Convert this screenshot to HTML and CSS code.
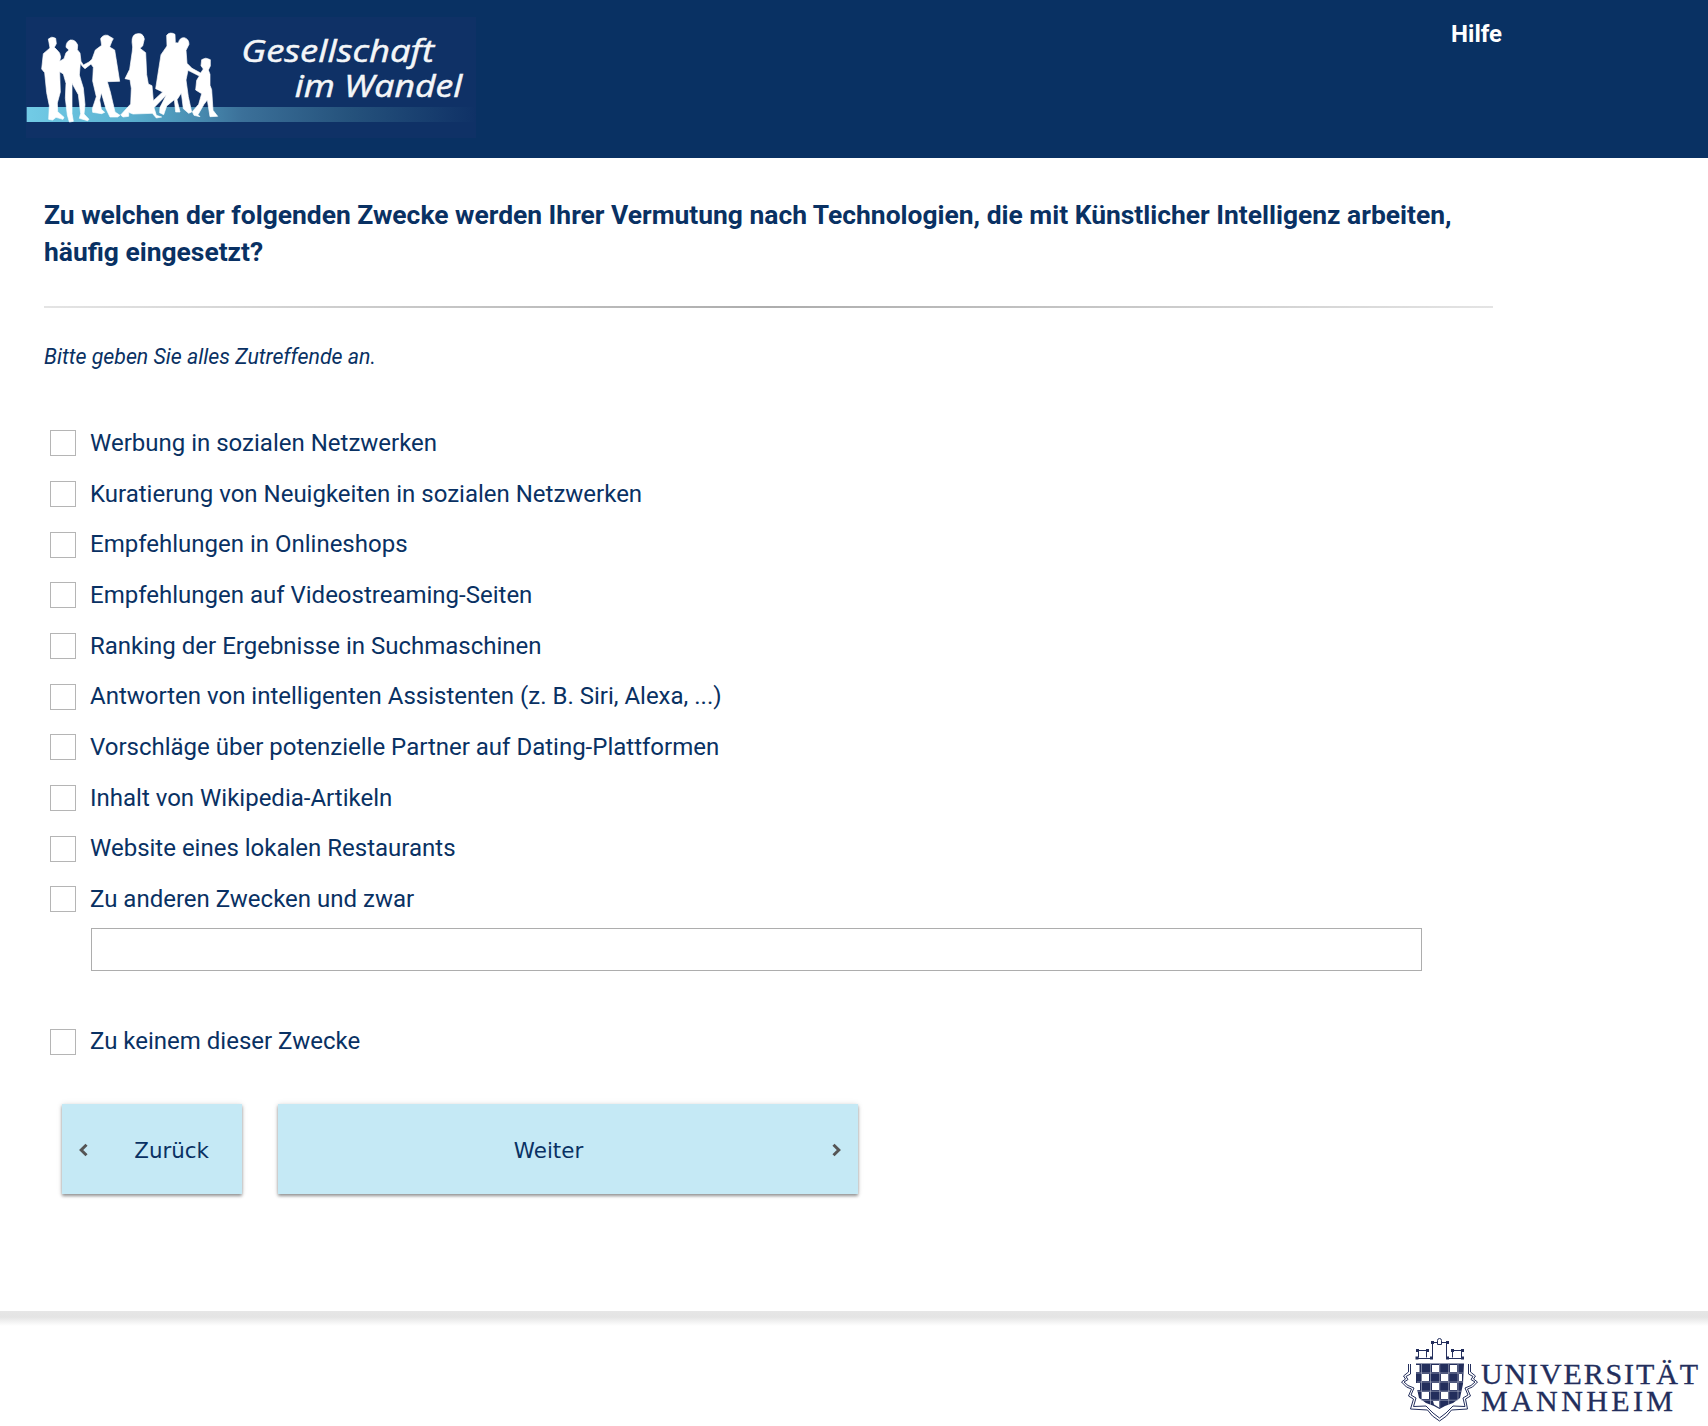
FILE: index.html
```html
<!DOCTYPE html>
<html lang="de">
<head>
<meta charset="utf-8">
<title>Gesellschaft im Wandel</title>
<link rel="stylesheet" href="styles.css">
</head>
<body>
<header class="header">
  <svg class="logo" viewBox="18 -9 1350 363" role="img" aria-label="Gesellschaft im Wandel">
    <defs>
      <linearGradient id="band" x1="0" x2="1" y1="0" y2="0">
        <stop offset="0" stop-color="#72cbe6"/>
        <stop offset=".22" stop-color="#5cb2d1"/>
        <stop offset=".37" stop-color="#4a8fb3"/>
        <stop offset=".48" stop-color="#3b7099"/>
        <stop offset=".72" stop-color="#25527c"/>
        <stop offset="1" stop-color="#0f3166"/>
      </linearGradient>
    </defs>
    <rect x="18" y="-9" width="1350" height="363" fill="#0f3166"/>
    <rect x="20" y="261" width="1348" height="45" fill="url(#band)"/>
    <g fill="#fff" stroke="#fff" stroke-width="2" stroke-linejoin="round">
      <path d="M85 57Q95 47 107 55L109 71L103 82L112 91Q121 98 122 111L119 124L132 116L138 98L147 90L138 82Q138 65 151 60Q166 58 173 75L172 89L180 99L183 124L190 135L207 126L216 118L226 90L245 76L242 56Q249 43 263 46L280 56L276 63L269 81L284 90L288 115L299 184L262 185L271 216L285 276L300 286L293 291L270 291L258 266L244 218L239 240L244 268L254 277L245 281L218 277L217 266L229 230L218 183L220 142L213 132L195 146L187 139L181 130L178 165L190 204L195 254L192 282L207 298L203 302L178 295L182 281L175 224L156 190L156 281L160 304L148 306L142 285L136 235L138 190L130 162L119 155L121 216L112 249L113 275L132 292L129 298L108 292L98 300L86 298L88 257L80 218L74 158L65 147L70 101L90 84Z"/>
      <path d="M338 81Q332 51 345 43Q369 35 373 57L368 78L360 85L377 98L380 164L385 192L396 197L400 242L428 216L407 206L423 104L441 78L440 46Q449 34 465 43L466 68L475 69Q479 52 493 53Q507 57 507 73L498 91L501 130L516 145L542 159L550 147L543 137L545 119Q557 110 571 119L571 138L565 150L570 163L570 196L575 209L579 271L593 289L570 290L562 240L552 253L534 284L540 290L522 286L517 275L536 253L545 221L527 210L530 181L538 168L504 151L498 180L505 230L515 276L506 280L490 266L484 219L471 239L480 276L467 276L463 239L440 258L431 284L419 278L420 262L439 225L402 263L409 286L425 291L409 294L397 280L339 282L326 277L326 289L309 291L302 285L332 252L334 205L330 179L315 176L329 148L337 93Z"/>
    </g>
    <g class="logo-text">
      <text x="664" y="127" textLength="578" lengthAdjust="spacingAndGlyphs">Gesellschaft</text>
      <text x="824" y="230" textLength="503" lengthAdjust="spacingAndGlyphs">im Wandel</text>
    </g>
  </svg>
  <a class="help">Hilfe</a>
</header>

<main class="survey">
  <h1 class="question">Zu welchen der folgenden Zwecke werden Ihrer Vermutung nach Technologien, die mit Künstlicher Intelligenz arbeiten, häufig eingesetzt?</h1>
  <div class="divider"></div>
  <p class="hint">Bitte geben Sie alles Zutreffende an.</p>
  <div class="options">
    <label class="option"><input class="box" type="checkbox"><span>Werbung in sozialen Netzwerken</span></label>
    <label class="option"><input class="box" type="checkbox"><span>Kuratierung von Neuigkeiten in sozialen Netzwerken</span></label>
    <label class="option"><input class="box" type="checkbox"><span>Empfehlungen in Onlineshops</span></label>
    <label class="option"><input class="box" type="checkbox"><span>Empfehlungen auf Videostreaming-Seiten</span></label>
    <label class="option"><input class="box" type="checkbox"><span>Ranking der Ergebnisse in Suchmaschinen</span></label>
    <label class="option"><input class="box" type="checkbox"><span>Antworten von intelligenten Assistenten (z. B. Siri, Alexa, ...)</span></label>
    <label class="option"><input class="box" type="checkbox"><span>Vorschläge über potenzielle Partner auf Dating-Plattformen</span></label>
    <label class="option"><input class="box" type="checkbox"><span>Inhalt von Wikipedia-Artikeln</span></label>
    <label class="option"><input class="box" type="checkbox"><span>Website eines lokalen Restaurants</span></label>
    <label class="option"><input class="box" type="checkbox"><span>Zu anderen Zwecken und zwar</span></label>
  </div>
  <input class="other" type="text" aria-label="Andere Zwecke">
  <label class="option option-none"><input class="box" type="checkbox"><span>Zu keinem dieser Zwecke</span></label>
  <div class="nav">
    <button class="btn btn-back"><svg class="chevron" viewBox="0 0 10 14"><path d="M8.500 1.800L3.200 7L8.500 12.200"/></svg><span>Zurück</span></button>
    <button class="btn btn-next"><span>Weiter</span><svg class="chevron" viewBox="0 0 10 14"><path d="M1.500 1.800L6.800 7L1.500 12.200"/></svg></button>
  </div>
</main>

<footer class="footer">
  <svg class="uni" viewBox="0 0 318 116" role="img" aria-label="Universität Mannheim">
    <g fill="none" stroke="#232e5c" stroke-width="1">
      <path d="M27 40.500H37.500M28.500 41V47.500M36.500 41V47.500M26 48.500H42.500V32.500M42 32.500H48M51 32.500H57.500M56.500 32.500V48.500H73M62.500 40.500H72M62.500 41V47.500M71.500 41V47.500M47.500 34.500V30.500Q47.500 28.500 49.500 28.500T51.500 30.500V34.500Z"/>
      <path d="M18.500 54V62L13.500 66L15.500 69L11.500 72L16.500 77L21.500 79L18.500 86L23.500 89L20.500 99L37.500 100L42.500 106L49.500 111L56.500 106L61.500 100L77.500 99L75.500 89L80.500 86L77.500 79L82.500 77L87.500 72L83.500 69L85.500 66L80.500 62V54"/>
      <path d="M20.500 54V64L16 66.500L18 69.500L14 72L18 75.500L24 78L21 85L26 88L23.500 96.500L36 96L43 103L49.500 108L56 103L63 96L75 96.500L73 88L78 85L75 78L81 75.500L85 72L81 69.500L83 66.500L78.500 64V54"/>
    </g>
    <g fill="#232e5c">
      <path d="M26 39h3v3h-3zM36 39h3v3h-3zM61 39h3v3h-3zM71 39h3v3h-3zM41 31h3v3h-3zM56 31h3v3h-3zM25.500 46.500h3v3h-3zM71 46.500h3v3h-3zM40 46.500h3v3h-3zM56 46.500h3v3h-3z"/>
      <path d="M26 53.500H74L73 74L70 88L63 93L55 96L49.500 99L44 96L36 93L29 88L26 74Z"/>
    </g>
    <g fill="#fff">
      <path d="M23.500 55h6v7h-6zM42 55h7v7h-7zM60 55h7v7h-7zM32 64h7v7h-7zM51 64h7v7h-7zM69 64h3v7h-3zM26 73h4v7h-4zM42 73h7v7h-7zM60 73h7v7h-7zM32 82h7v7h-7zM51 82h7v7h-7zM43 91h6v6.500l-5-3z"/>
    </g>
    <path d="M31.500 54V91M40.500 54V95M49.700 54V98M58.700 54V95M68 54V90M26 63H73M27 72H73M28 81.200H71M32 90.200H68" stroke="#b9bdce" stroke-width=".6"/>
    <g class="uni-text">
      <text x="91" y="73.500" textLength="217" lengthAdjust="spacing">UNIVERSITÄT</text>
      <text x="91" y="101" textLength="192" lengthAdjust="spacing">MANNHEIM</text>
    </g>
  </svg>
</footer>
</body>
</html>
```
FILE: styles.css
```css
* { box-sizing: border-box; }
body {
  margin: 0;
  height: 1426px;
  display: flex;
  flex-direction: column;
  overflow: hidden;
  background: #fff;
  color: #093163;
  font-family: Roboto, "Liberation Sans", sans-serif;
}
.header {
  height: 158px;
  flex: none;
  display: flex;
  justify-content: space-between;
  align-items: flex-start;
  padding: 17px 206px 0 26px;
  background: #093163;
}
.logo { display: block; width: 450px; height: 121px; }
.logo-text {
  fill: #f4f6f8;
  stroke: #f4f6f8;
  stroke-width: 1.5px;
  font: italic 94px "Open Sans", "Noto Sans", sans-serif;
}
.help {
  color: #fff;
  font-size: 24px;
  font-weight: 700;
  line-height: 34px;
}
.survey { flex: none; height: 1153px; width: 1537px; padding: 38px 44px 0; }
.question { margin: 0; font-size: 26.42px; line-height: 37px; font-weight: 700; }
.divider {
  height: 2px;
  margin-top: 36px;
  background: linear-gradient(90deg, #e4e4e4, #adadad 50%, #e4e4e4);
}
.hint { margin: 35px 0 0; font-size: 21.33px; font-style: italic; line-height: 28px; }
.options { margin-top: 47px; }
.option {
  display: flex;
  align-items: center;
  gap: 14px;
  height: 50.66px;
  padding-left: 6px;
  font-size: 24px;
  line-height: 30px;
}
.option span { padding-bottom: .7px; }
.box {
  appearance: none;
  flex: none;
  width: 26px;
  height: 26px;
  margin: 0;
  border: 1px solid #b5b5b5;
  background: #fff;
}
.other {
  display: block;
  width: 1331px;
  height: 43px;
  margin: 3.4px 0 0 47px;
  padding: 0 10px;
  border: 1px solid #adadad;
  font: 24px Roboto, sans-serif;
}
.option-none { margin-top: 46px; }
.option-none span { padding-bottom: 2px; }
.nav { display: flex; gap: 36px; margin: 36px 0 0 18px; }
.btn {
  display: flex;
  align-items: center;
  height: 90px;
  border: 0;
  background: #c5e9f5;
  color: #093163;
  font: 21.4px "DejaVu Sans", sans-serif;
  box-shadow: 0 2px 3px rgba(0, 0, 0, .4), 0 0 6px rgba(0, 0, 0, .1);
}
.btn span { padding-top: 3px; }
.btn-back { width: 180px; padding: 0 33px 0 16px; justify-content: space-between; }
.btn-next { width: 580px; padding: 0 16px 0 0; }
.btn-next span { flex: 1; padding-right: 13px; text-align: center; }
.chevron { width: 10px; height: 14px; margin-top: 2px; fill: none; stroke: #555; stroke-width: 3; }
.footer {
  flex: none;
  height: 115px;
  display: flex;
  justify-content: flex-end;
  background: linear-gradient(#e6e6e6, #e4e4e4 6px, #fff 15px);
}
.uni { display: block; width: 318px; height: 116px; margin-top: -1px; }
.uni-text {
  fill: #232e5c;
  stroke: #232e5c;
  stroke-width: .3px;
  font: 30px "Liberation Serif", serif;
}
```
